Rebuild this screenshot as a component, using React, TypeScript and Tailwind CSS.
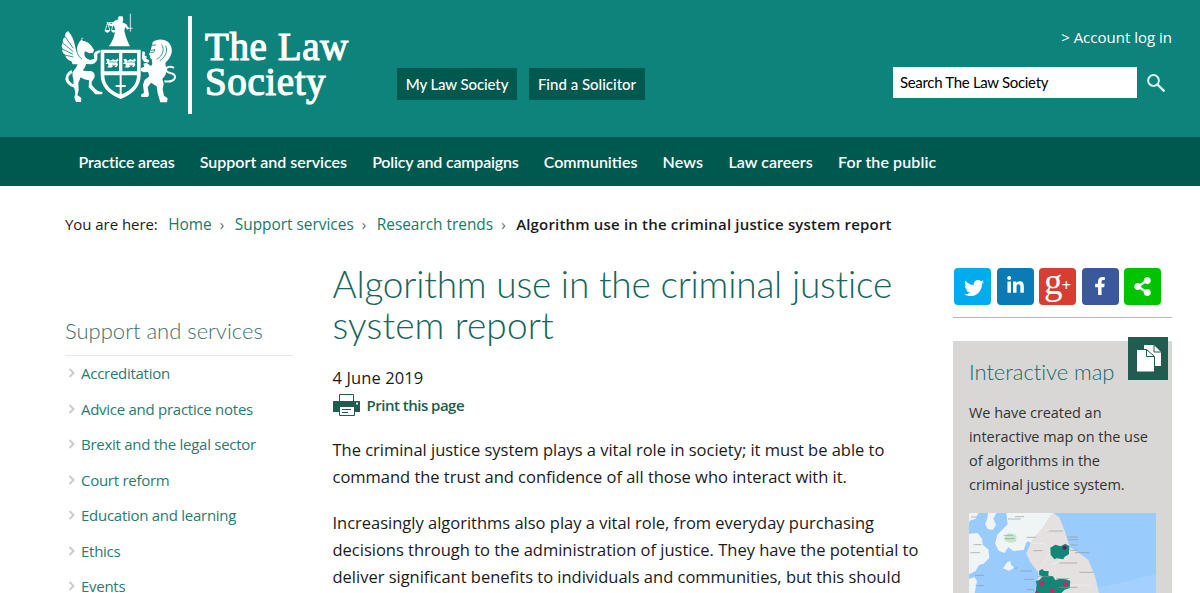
import { FaFacebookF, FaLinkedinIn, FaShareAlt, FaTwitter } from "react-icons/fa";

const navItems = [
  { label: "Practice areas", tracking: "tracking-[-0.15px]" },
  { label: "Support and services", tracking: "tracking-normal" },
  { label: "Policy and campaigns", tracking: "tracking-[-0.2px]" },
  { label: "Communities", tracking: "tracking-normal" },
  { label: "News", tracking: "tracking-[0.15px]" },
  { label: "Law careers", tracking: "tracking-[0.05px]" },
  { label: "For the public", tracking: "tracking-[0.1px]" },
];

const sideLinks = [
  "Accreditation",
  "Advice and practice notes",
  "Brexit and the legal sector",
  "Court reform",
  "Education and learning",
  "Ethics",
  "Events",
];

const crumbs = ["Home", "Support services", "Research trends"];

function Crest() {
  return (
    <svg viewBox="0 0 414 294" className="mt-[5px] h-[98px] w-[138px] shrink-0" fill="#fff" aria-hidden="true">
      {/* justice */}
      <path d="M207 34h11l2 10-3 8 12 6 8 12-4 4-8-8-2 12c4 18 10 32 17 46h-64c10-12 17-29 20-47l-1-15-14 2-7-6 3-4 8 3 9-10 13-5-4-2z" />
      <path
        d="M241 26v54M235 70h13M170 53h28M173 53l-7 22M173 53l6 22M190 53l-5 22M190 53l7 22"
        fill="none"
        stroke="#fff"
        strokeWidth="2.500"
      />
      <path d="M163 75h18q-3 8-9 8t-9-8zM183 75h17q-3 8-9 8t-8-8z" />

      {/* shield */}
      <path d="M152 134h120v76c0 34-23 58-60 72-37-14-60-38-60-72z" />
      <path d="M163 144h44v55h-44zM217 144h44v55h-44z" fill="#0d837b" />
      <path
        d="M163 211h46v29h-12v6h12v22c-28-12-46-29-46-57zM215 211h46c0 28-18 45-46 57v-22h12v-6h-12z"
        fill="#0d837b"
      />
      <path d="M168 163l8-2 4 6 9-4 9 3 4-6 4 6-5 5 3 8-5 8-8-5-8 6-12-1 5-5-2-6-8 1 6-6zM220 163l8-2 4 6 9-4 8 2 5-5 4 6-5 5 3 8-5 8-8-5-8 6-12-1 5-5-2-6-8 1 6-6z" />
      <path d="M178 171h22M230 171h22M186 181h12M238 181h12" stroke="#0d837b" strokeWidth="2" />

      {/* winged horse */}
      <path d="M54 78c-7 5-10 10-8 18-7 4-9 10-7 17-5 5-5 12-1 18-3 7 0 13 7 18 2 9 8 16 19 20l4 9h18c9-3 13-9 14-16-12-6-19-14-22-26-3-17-8-42-24-58z" />
      <path d="M46 96l24 34M38 114l32 26M37 132l32 16M44 150l26 6" fill="none" stroke="#0d837b" strokeWidth="2.500" />
      <path d="M94 98l4 9c12 2 22 8 28 18l6 10-3 8-10 2-14-6c-4 8-2 16 6 22l10 4 12-4-2-14 5-7 12-5 3 6-9 6 0 16c-3 10-11 15-19 15l-15-1c-1 9-6 14-10 19l9 2 16 0c10 3 13 11 10 20l-8 13 0 8 10 12 10 8 13 2-2 7h-20l-20-21 1-21c-10-2-19-4-25-9l-7 17 1 22-4 14 12 9-1 12h-15l-5-13 3-14-5-23-1-19c-5-12-3-22 5-30 6-8 10-16 8-27-7-18-5-53 17-66z" />
      <path d="M66 199c-12 6-19 18-13 30 6 11 16 14 28 16" fill="none" stroke="#fff" strokeWidth="9" />
      <path d="M80 122c-2 18 4 31 16 41" fill="none" stroke="#0d837b" strokeWidth="2.500" />

      {/* lion */}
      <path d="M308 112c12-11 35-11 47 0 12 11 14 30 5 44-4 9-11 12-14 19l3 20-2 14-10 13 4 15-3 16 4 19 11 8-2 12h-20l-8-27-3-21-17-11-10 14 4 22-3 7h-20l-1-7 9-6-3-24 5-14 14-11-4-13-13 1-8-4 0-9 10-4-3-9 9-3 14 10 4-6-2-14-5-5 1-6-4-3 6-16z" />
      <path d="M277 139l8 2-1 11 6 1-1 8 9 5-3 7-13-3-6-9z" />
      <path d="M335 119c9 14 5 32-15 44M347 122c7 17-1 36-18 45" fill="none" stroke="#0d837b" strokeWidth="2.500" />
      <path d="M304 121l15-1M302 136l13-2-5 8h-9" fill="none" stroke="#0d837b" strokeWidth="2.500" />
      <path d="M343 229c20 3 32-3 32-14 0-14-26-8-27-20 0-10 13-13 24-6" fill="none" stroke="#fff" strokeWidth="6" />
    </svg>
  );
}

function Logo() {
  return (
    <div className="flex w-[346px] shrink-0 pl-[50px]">
      <Crest />
      <div className="mt-4 h-[98px] w-[4px] shrink-0 bg-white" />
      <div className="pt-[29px] pl-[13px] font-['Liberation_Serif',serif] text-[39px] leading-[35px] tracking-[0.6px] whitespace-nowrap text-white [-webkit-text-stroke:1.2px_white]">
        The Law
        <br />
        Society
      </div>
    </div>
  );
}

function PrinterIcon() {
  return (
    <svg viewBox="0 0 27 22" className="h-[22px] w-[27px]" aria-hidden="true">
      <path d="M6.500 7V.5h14V7" fill="#fff" stroke="#205c4f" />
      <path d="M0 7h27v11H0z" fill="#205c4f" />
      <path d="M6.500 12.500h15v9h-15z" fill="#fff" stroke="#205c4f" />
      <path d="M9 15.500h9M9 18.500h6" stroke="#205c4f" />
      <path d="M23 8.500h2v2h-2z" fill="#fff" />
    </svg>
  );
}

function PagesIcon() {
  return (
    <svg viewBox="0 0 40 43" className="h-[43px] w-[40px]" aria-hidden="true">
      <path d="M16 8h10l7 7v14H16z" fill="#fff" />
      <path d="M26 8v7h7" fill="none" stroke="#205c4f" />
      <path d="M8.500 12.500h10l8 7V35h-18z" fill="#fff" stroke="#205c4f" />
      <path d="M18.500 12.500v7h8" fill="none" stroke="#205c4f" />
    </svg>
  );
}

function MapPicture() {
  return (
    <svg viewBox="0 0 561 240" className="h-[80px] w-[187px]" aria-hidden="true">
      <path d="M0 0h561v240H0z" fill="#9acbfd" />
      <path d="M330 240L561 183v57z" fill="#a3d0fe" />
      <g fill="#eff4f5">
        <path d="M0 0h28l-9 18-14 4-5 6zM57 0h25l-9 17 8 19-10 15-15-3-8-14 7-18z" />
        <path d="M112 0h140l8 10-12 20-30 23-27 18-19 18-8 22-31 3-15-11-12 17-17-7-11-22 7-26 31-31z" />
        <path d="M170 0h84l18 20-30 60-50 14-20-12z" />
        <path d="M0 62l26-2 13 17 2 18 17 14 3 25-17 18-14 4-10 18-20 10zM102 166l12-18 10-4 2 12 12 8-18 9z" />
        <path d="M0 198l16-6 8 12-7 36H0z" />
      </g>
      <path d="M106 72l13-12 23 5v21l-17 4-17-6z" fill="#c4e8cd" />
      <path
        d="M250 0l20 12 18 45 14 46 20 10 36 28 20 49 12 50h-170l5-24-21-9 6-25-2-28-1-10 18-30 12-45 9-21 16-22z"
        fill="#e5e1e0"
      />
      <path
        d="M252 0l18 12 18 45 12 46 20 10 36 28 20 49 12 50H204l5-60-26-34-11-25 18-42 32-36 14-24z"
        fill="#e5e1e0"
      />
      <path
        d="M228 50l20 3 25-3M184 90l42 2 20 27M245 119l-28 42M303 112l-4 24-55 19M301 216l64 1"
        fill="none"
        stroke="#f0eeed"
        strokeWidth="2"
      />
      <path d="M244 104l15-9 16 5 14-8 12 8-1 24-13 7-4 8-20-3-7 3-11-14z" fill="#128776" />
      <path
        d="M210 174l9-6 7 6h13l-1 14 14 2 7 12 12-5 20 2 13 5-2 21-15 5-10 10h-77l3-26-3-9 12-5 9-10-10-3z"
        fill="#128776"
      />
      <g fill="#df1b65">
        <circle cx="218" cy="211" r="7" />
        <circle cx="250" cy="233" r="7" />
        <circle cx="290" cy="214" r="7" />
        <circle cx="204" cy="240" r="6" />
      </g>
      <circle cx="287" cy="104" r="6" fill="#66185f" />
      <path
        d="M138 11h27M117 18h38M6 12h17M14 95h24M4 119h29M173 73h27M239 54h43M193 113h27M271 150h53M331 178h42M295 72h31M299 80h28M304 96h22M318 119h43M304 112h23M153 174h35M166 199h29M205 191h38M262 197h39M269 223h57M173 230h23M104 67h28M107 77h30M133 165h13M18 187h28M19 218h27"
        stroke="#8c9299"
        strokeWidth="3"
        opacity=".6"
      />
    </svg>
  );
}

export default function App() {
  return (
    <div className="h-[593px] w-[1200px] overflow-hidden bg-white font-['Open_Sans','Noto_Sans',sans-serif] text-[#1b1b1b]">
      <header className="flex h-[137px] bg-[#0d837b]">
        <Logo />
        <div className="flex gap-3 pt-[68px] pl-[51px] font-['Lato',sans-serif] text-[15px] font-medium whitespace-nowrap text-white">
          <a className="flex h-8 w-[120px] items-center justify-center bg-[#00594f] tracking-[-0.1px]">My Law Society</a>
          <a className="flex h-8 w-[116px] items-center justify-center bg-[#00594f]">Find a Solicitor</a>
        </div>
        <div className="ml-auto flex w-[307px] flex-col pr-7">
          <a className="mt-[25px] h-[42px] self-end text-[15px] leading-6 text-white">&gt; Account log in</a>
          <div className="flex items-center">
            <div className="flex h-[31px] w-[244px] items-center bg-white pl-[7px] font-['Lato',sans-serif] text-[15px] tracking-[-0.32px] text-black">
              Search The Law Society
            </div>
            <svg viewBox="0 0 18 18" className="ml-[10px] size-[18px]" fill="none" stroke="#d5f3f0">
              <circle cx="6.500" cy="6.500" r="5.400" strokeWidth="2" />
              <path d="M10.500 10.500l7 7" strokeWidth="2.400" />
            </svg>
          </div>
        </div>
      </header>

      <nav className="flex h-[49px] items-center gap-[25.200px] bg-[#00594f] pl-[78.500px] font-['Lato',sans-serif] text-base font-semibold whitespace-nowrap text-white">
        {navItems.map((item) => (
          <a key={item.label} className={item.tracking}>
            {item.label}
          </a>
        ))}
      </nav>

      <div className="flex h-[77px] items-center pl-[65px] text-[15px] whitespace-nowrap">
        <span className="mr-[10.500px] tracking-[-0.05px]">You are here:</span>
        {crumbs.map((crumb) => (
          <span key={crumb} className="flex items-center">
            <a className="text-[15.400px] text-[#147a6d]">{crumb}</a>
            <span className="mr-[10.500px] ml-[8px] text-[#666]">›</span>
          </span>
        ))}
        <span className="font-semibold tracking-[0.18px]">Algorithm use in the criminal justice system report</span>
      </div>

      <div className="flex">
        <aside className="ml-[65px] w-[228px] pt-[50px]">
          <h2 className="h-[43px] border-b border-[#e3e8e8] font-['Lato',sans-serif] text-[22px] leading-[35px] font-light text-[#3f706b]">
            Support and services
          </h2>
          <ul className="-mt-[0.500px] text-[15px] tracking-[-0.27px] text-[#2a7b72]">
            {sideLinks.map((link) => (
              <li key={link} className="flex h-[35.500px] items-center gap-[5px] pl-[3px]">
                <svg viewBox="0 0 8 10" className="h-[10px] w-2" fill="none" stroke="#ccc" strokeWidth="2">
                  <path d="M1.500 1l4 4-4 4" />
                </svg>
                {link}
              </li>
            ))}
          </ul>
        </aside>

        <main className="ml-[39.500px] w-[600.500px] whitespace-nowrap">
          <h1 className="pb-px font-['Lato',sans-serif] text-[37px] leading-[41px] font-light text-[#15665b]">
            <span className="tracking-[-0.2px]">Algorithm use in the criminal justice</span>
            <br />
            <span className="tracking-[0.15px]">system report</span>
          </h1>
          <p className="mt-[18px] text-[16.500px] leading-7 tracking-[0.1px]">4 June 2019</p>
          <a className="-mt-px flex h-7 items-center gap-[7px] text-[15px] font-semibold tracking-[-0.5px] text-[#205c4f]">
            <PrinterIcon />
            Print this page
          </a>
          <p className="mt-[16.500px] text-[16.500px] leading-[27.200px] tracking-[-0.02px]">
            The criminal justice system plays a vital role in society; it must be able to
            <br />
            command the trust and confidence of all those who interact with it.
          </p>
          <p className="mt-[19px] text-[16.500px] leading-[27.200px] tracking-[-0.01px]">
            Increasingly algorithms also play a vital role, from everyday purchasing
            <br />
            decisions through to the administration of justice. They have the potential to
            <br />
            deliver significant benefits to individuals and communities, but this should
          </p>
        </main>

        <aside className="ml-5 w-[219px]">
          <div className="flex h-[55px] gap-[5.500px] border-b border-[#b9b5b2] pt-[5px] pl-px text-white">
            <span className="flex size-[37px] items-center justify-center rounded bg-[#00aced] pt-[2px] pl-[3px]">
              <FaTwitter size={20} />
            </span>
            <span className="flex size-[37px] items-center justify-center rounded bg-[#0b7bb5] pb-[2px]">
              <FaLinkedinIn size={19} />
            </span>
            <span className="flex size-[37px] items-center justify-center rounded bg-[#d73d32] pb-[11px] font-['Liberation_Serif',serif] text-[37px] leading-none">
              g<span className="-ml-px pt-2 text-[17px] font-bold">+</span>
            </span>
            <span className="flex size-[37px] items-center justify-center rounded bg-[#3a589b] pb-px">
              <FaFacebookF size={18} />
            </span>
            <span className="flex size-[37px] items-center justify-center rounded bg-[#00c400]">
              <FaShareAlt size={19} />
            </span>
          </div>
          <section className="relative mt-[23px] h-[260px] bg-[#d9d7d6] px-4 pt-[15px]">
            <div className="absolute -top-[4px] right-[4px] bg-[#205c4f]">
              <PagesIcon />
            </div>
            <h2 className="font-['Lato',sans-serif] text-[22px] leading-[31px] font-light tracking-[-0.05px] text-[#20695e]">
              Interactive map
            </h2>
            <p className="mt-[14px] mb-4 text-[14.500px] leading-6 tracking-[-0.05px] whitespace-nowrap text-[#333]">
              We have created an
              <br />
              interactive map on the use
              <br />
              of algorithms in the
              <br />
              criminal justice system.
            </p>
            <MapPicture />
          </section>
        </aside>
      </div>
    </div>
  );
}
